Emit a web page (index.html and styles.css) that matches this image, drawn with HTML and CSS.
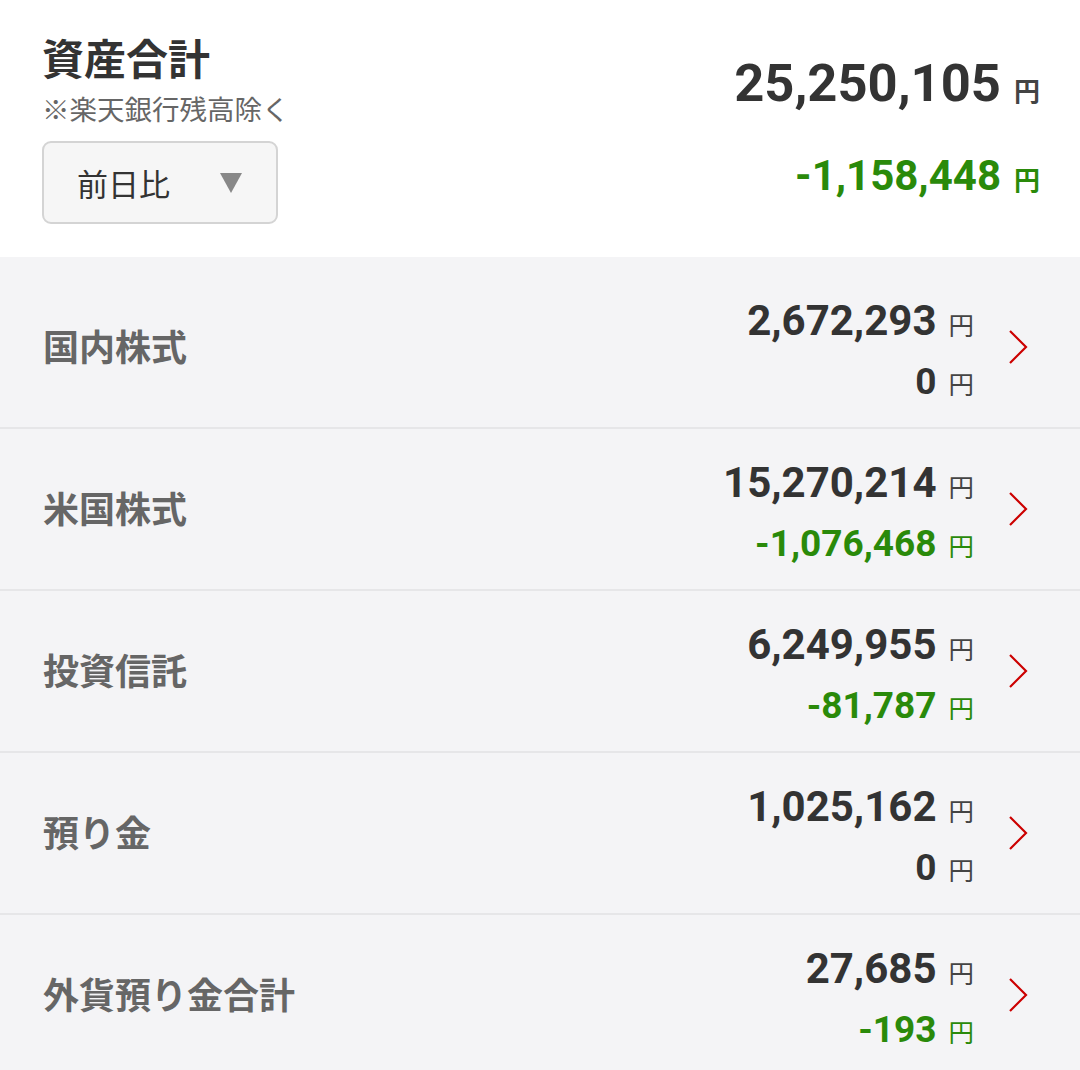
FILE: index.html
```html
<!DOCTYPE html>
<html lang="ja">
<head>
  <meta charset="UTF-8" />
  <meta name="viewport" content="width=device-width, initial-scale=1.0">
  <title>資産合計</title>
  <link rel="stylesheet" href="styles.css">
</head>

<body>
  <div class="summary">
    <div class="summary-left">
      <h1 class="titulo">資産合計</h1>
      <p class="nota">※楽天銀行残高除く</p>
      <div class="selector">
        <span>前日比</span>
        <span class="flecha"></span>
      </div>
    </div>
    <div class="summary-right">
      <div class="total"><span class="num">25,250,105</span><span class="yen">円</span></div>
      <div class="total-diff minus"><span class="num">-1,158,448</span><span class="yen">円</span></div>
    </div>
  </div>

  <ul class="lista">
    <li class="fila">
      <span class="etiqueta">国内株式</span>
      <div class="montos">
        <div class="monto"><span class="num">2,672,293</span><span class="yen">円</span></div>
        <div class="diff"><span class="num">0</span><span class="yen">円</span></div>
      </div>
      <svg class="chevron" viewBox="0 0 20 34" width="20" height="34"><path d="M2 1 L18 17 L2 33" /></svg>
    </li>
    <li class="fila">
      <span class="etiqueta">米国株式</span>
      <div class="montos">
        <div class="monto"><span class="num">15,270,214</span><span class="yen">円</span></div>
        <div class="diff minus"><span class="num">-1,076,468</span><span class="yen">円</span></div>
      </div>
      <svg class="chevron" viewBox="0 0 20 34" width="20" height="34"><path d="M2 1 L18 17 L2 33" /></svg>
    </li>
    <li class="fila">
      <span class="etiqueta">投資信託</span>
      <div class="montos">
        <div class="monto"><span class="num">6,249,955</span><span class="yen">円</span></div>
        <div class="diff minus"><span class="num">-81,787</span><span class="yen">円</span></div>
      </div>
      <svg class="chevron" viewBox="0 0 20 34" width="20" height="34"><path d="M2 1 L18 17 L2 33" /></svg>
    </li>
    <li class="fila">
      <span class="etiqueta">預り金</span>
      <div class="montos">
        <div class="monto"><span class="num">1,025,162</span><span class="yen">円</span></div>
        <div class="diff"><span class="num">0</span><span class="yen">円</span></div>
      </div>
      <svg class="chevron" viewBox="0 0 20 34" width="20" height="34"><path d="M2 1 L18 17 L2 33" /></svg>
    </li>
    <li class="fila">
      <span class="etiqueta">外貨預り金合計</span>
      <div class="montos">
        <div class="monto"><span class="num">27,685</span><span class="yen">円</span></div>
        <div class="diff minus"><span class="num">-193</span><span class="yen">円</span></div>
      </div>
      <svg class="chevron" viewBox="0 0 20 34" width="20" height="34"><path d="M2 1 L18 17 L2 33" /></svg>
    </li>
  </ul>
</body>
</html>
```

FILE: styles.css
```css
body {
  margin: 0;
  padding: 0;
  background-color: #f4f4f6;
  font-family: 'Noto Sans CJK JP', 'Noto Sans', sans-serif;
  color: #333;
}

.summary {
  display: flex;
  justify-content: space-between;
  background-color: white;
  padding: 30px 40px 33px 42px;
  height: 194px;
}

.titulo {
  margin: 0;
  font-size: 42px;
  line-height: 54px;
  font-weight: bold;
  color: #333;
}

.nota {
  margin: 4px 0 13px 0;
  font-size: 27.5px;
  line-height: 40px;
  color: #666;
}

.selector {
  display: flex;
  align-items: center;
  justify-content: space-between;
  box-sizing: border-box;
  width: 236px;
  height: 83px;
  padding: 0 34px 0 33px;
  background-color: #f6f6f6;
  border: 2px solid #d4d4d4;
  border-radius: 9px;
  font-size: 31px;
  color: #333;
}

.flecha {
  width: 0;
  height: 0;
  border-left: 11px solid transparent;
  border-right: 11px solid transparent;
  border-top: 20px solid #888;
}

.summary-right {
  display: flex;
  flex-direction: column;
  align-items: flex-end;
}

.num {
  font-family: 'Roboto', 'Liberation Sans', sans-serif;
  font-weight: bold;
}

.yen {
  font-size: 26px;
  margin-left: 14px;
  color: #444;
}

.total {
  margin-top: 16px;
  font-size: 52.5px;
  line-height: 64px;
  color: #333;
}

.total-diff {
  margin-top: 24px;
  font-size: 42px;
  line-height: 52px;
}

.total .yen,
.total-diff .yen {
  font-weight: bold;
  margin-left: 13px;
}

.minus,
.minus .yen {
  color: #2a8a0a;
}

.lista {
  list-style: none;
  margin: 0;
  padding: 10px 0 0 0;
}

.fila {
  display: flex;
  align-items: center;
  height: 160px;
  padding: 0 52px 0 43px;
  border-bottom: 2px solid #e6e6e8;
}

.etiqueta {
  flex: 1;
  font-size: 36px;
  font-weight: bold;
  color: #666;
  margin-top: -4px;
}

.montos {
  display: flex;
  flex-direction: column;
  align-items: flex-end;
  margin-right: 34px;
}

.monto {
  font-size: 42px;
  line-height: 60px;
  color: #333;
}

.diff {
  font-size: 37px;
  line-height: 48px;
  color: #333;
}

.diff.minus,
.diff.minus .yen {
  color: #2a8a0a;
}

.monto .yen,
.diff .yen {
  font-size: 25.5px;
  margin-left: 12px;
}

.chevron {
  flex: none;
}

.chevron path {
  fill: none;
  stroke: #c00;
  stroke-width: 2.2;
}
```
